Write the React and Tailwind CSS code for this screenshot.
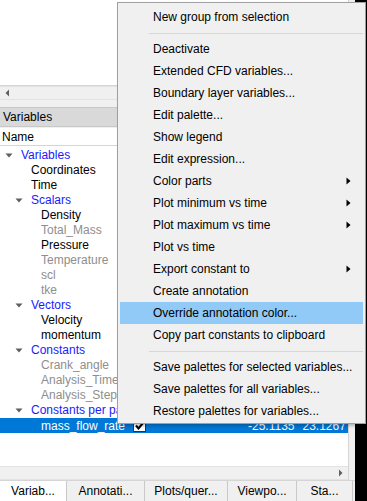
import React from "react";

const font = { fontFamily: '"Liberation Sans", Arial, sans-serif' };

const tree = [
  { label: "Variables", level: 0, kind: "group" },
  { label: "Coordinates", level: 1 },
  { label: "Time", level: 1 },
  { label: "Scalars", level: 1, kind: "group" },
  { label: "Density", level: 2 },
  { label: "Total_Mass", level: 2, dim: true },
  { label: "Pressure", level: 2 },
  { label: "Temperature", level: 2, dim: true },
  { label: "scl", level: 2, dim: true },
  { label: "tke", level: 2, dim: true },
  { label: "Vectors", level: 1, kind: "group" },
  { label: "Velocity", level: 2 },
  { label: "momentum", level: 2 },
  { label: "Constants", level: 1, kind: "group" },
  { label: "Crank_angle", level: 2, dim: true },
  { label: "Analysis_Time", level: 2, dim: true },
  { label: "Analysis_Step", level: 2, dim: true },
  { label: "Constants per part", level: 1, kind: "group" },
];

const menu = [
  { label: "New group from selection" },
  { sep: true },
  { label: "Deactivate" },
  { label: "Extended CFD variables..." },
  { label: "Boundary layer variables..." },
  { label: "Edit palette..." },
  { label: "Show legend" },
  { label: "Edit expression..." },
  { label: "Color parts", sub: true },
  { label: "Plot minimum vs time", sub: true },
  { label: "Plot maximum vs time", sub: true },
  { label: "Plot vs time" },
  { label: "Export constant to", sub: true },
  { label: "Create annotation" },
  { label: "Override annotation color...", hot: true },
  { label: "Copy part constants to clipboard" },
  { sep: true },
  { label: "Save palettes for selected variables..." },
  { label: "Save palettes for all variables..." },
  { label: "Restore palettes for variables..." },
];

const tabs = [
  { label: "Variab...", w: "w-[67px]", active: true },
  { label: "Annotati...", w: "w-[78px]" },
  { label: "Plots/quer...", w: "w-[83px]" },
  { label: "Viewpo...", w: "w-[69px]" },
  { label: "Sta...", w: "w-[56px]" },
];

const Expander = () => (
  <svg width="8" height="5" viewBox="0 0 8 5" className="shrink-0">
    <path d="M0.5 0.5 L7.5 0.5 L4 4.5 Z" fill="#5f5f5f" />
  </svg>
);

const ScrollBar = ({ right }) => (
  <div className="h-[14px] bg-[#f0f0f0] border-y border-[#e3e3e3] flex items-center">
    {!right && (
      <svg width="14" height="12" viewBox="0 0 14 12" className="ml-[1px]">
        <path d="M8 2.5 L8 9.5 L4.5 6 Z" fill="#606060" />
      </svg>
    )}
    <div className="flex-1" />
    {right && (
      <svg width="14" height="12" viewBox="0 0 14 12" className="mr-[1px]">
        <path d="M6 2.5 L6 9.5 L9.5 6 Z" fill="#606060" />
      </svg>
    )}
  </div>
);

const App = () => {
  return (
    <div className="w-[367px] h-[501px] flex bg-black relative overflow-hidden text-[12px]" style={font}>
      <div className="w-[355px] h-full bg-[#f0f0f0] flex flex-col">
        {/* top pane */}
        <div className="w-[349px] h-[86px] bg-white border-r border-b border-[#d5d5d5]" />
        <div className="w-[349px]">
          <ScrollBar />
        </div>
        <div className="h-[7px]" />
        {/* Variables header */}
        <div className="w-[349px] h-[20px] bg-[#d9d9d9] border-y border-[#c8c8c8] flex items-center pl-[3px] text-black">
          Variables
        </div>
        <div className="h-[1px]" />
        {/* column header */}
        <div className="w-[349px] h-[18px] bg-white border-b border-[#d5d5d5] flex items-center pl-[2px] text-black">
          Name
        </div>
        {/* tree */}
        <div className="w-[349px] flex-1 bg-white flex flex-col pt-[2px] border-r border-[#d5d5d5]">
          {tree.map((r, i) => (
            <div key={i} className="h-[15px] flex items-center whitespace-nowrap" style={{ paddingLeft: r.level * 10 + (r.kind ? 5 : 21) }}>
              {r.kind && <Expander />}
              <span
                className={
                  (r.kind ? "ml-[8px] text-[#1a1aff]" : r.dim ? "text-[#8e8e8e]" : "text-black") + " leading-[15px]"
                }
              >
                {r.label}
              </span>
            </div>
          ))}
          <div className="h-[15px] bg-[#0078d7] flex items-center text-white whitespace-nowrap">
            <span className="pl-[41px] w-[133px]">mass_flow_rate</span>
            <span className="w-[13px] h-[12px] bg-white border border-[#333] flex items-center justify-center">
              <svg width="9" height="8" viewBox="0 0 9 8">
                <path d="M1 3.5 L3.5 6.5 L8 1" stroke="#000" strokeWidth="2" fill="none" />
              </svg>
            </span>
            <span className="ml-[102px]">-25.1135</span>
            <span className="ml-[8px]">23.1267</span>
          </div>
          <div className="flex-1" />
          <ScrollBar right />
        </div>
        {/* tabs */}
        <div className="h-[21px] flex border-t border-[#d5d5d5]">
          {tabs.map((t, i) => (
            <div
              key={i}
              className={
                t.w +
                " h-full flex items-center justify-center border-r border-[#c8c8c8] text-black " +
                (t.active ? "bg-white" : "bg-[#f0f0f0]")
              }
            >
              {t.label}
            </div>
          ))}
        </div>
      </div>

      {/* context menu */}
      <div className="absolute left-[117px] top-[2px] w-[249px] bg-[#f0f0f0] border border-[#a0a0a0] shadow-[2px_2px_3px_rgba(0,0,0,0.25)] pt-[3px] pb-[1px] px-[2px] whitespace-nowrap">
        {menu.map((m, i) =>
          m.sep ? (
            <div key={i} className="h-[10px] flex items-center pl-[29px]">
              <div className="w-full h-[1px] bg-[#d7d7d7]" />
            </div>
          ) : (
            <div
              key={i}
              className={"h-[22px] flex items-center pl-[33px] pr-[12px] text-black " + (m.hot ? "bg-[#91c9f7]" : "")}
            >
              <span className="flex-1">{m.label}</span>
              {m.sub && (
                <svg width="5" height="8" viewBox="0 0 5 8">
                  <path d="M0.5 0.5 L4.5 4 L0.5 7.5 Z" fill="#000" />
                </svg>
              )}
            </div>
          )
        )}
      </div>
    </div>
  );
};

export default App;
